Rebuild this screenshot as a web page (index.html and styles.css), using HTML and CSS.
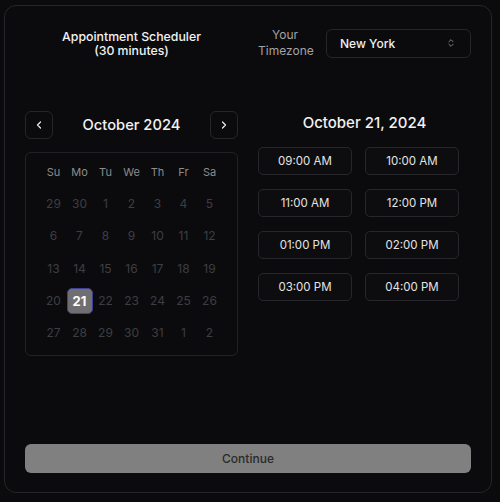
FILE: index.html
```html
<!DOCTYPE html>
<html>
<head>
<meta charset="utf-8">
<link rel="stylesheet" href="styles.css">
</head>
<body>
<div class="card">
  <div class="header">
    <div class="title">Appointment Scheduler<br>(30 minutes)</div>
    <div class="tz">
      <div class="tz-label">Your<br>Timezone</div>
      <div class="select">
        <span>New York</span>
        <svg class="updown" width="10" height="12" viewBox="0 0 24 24" fill="none" stroke="currentColor" stroke-width="2.2" stroke-linecap="round" stroke-linejoin="round"><path d="m7 15 5 5 5-5"/><path d="m7 9 5-5 5 5"/></svg>
      </div>
    </div>
  </div>
  <div class="main">
    <div class="left">
      <div class="nav">
        <button class="navbtn"><svg width="12" height="12" viewBox="0 0 24 24" fill="none" stroke="currentColor" stroke-width="2.4" stroke-linecap="round" stroke-linejoin="round"><path d="m15 18-6-6 6-6"/></svg></button>
        <div class="month">October 2024</div>
        <button class="navbtn"><svg width="12" height="12" viewBox="0 0 24 24" fill="none" stroke="currentColor" stroke-width="2.4" stroke-linecap="round" stroke-linejoin="round"><path d="m9 18 6-6-6-6"/></svg></button>
      </div>
      <div class="cal">
        <div class="wd">Su</div><div class="wd">Mo</div><div class="wd">Tu</div><div class="wd">We</div><div class="wd">Th</div><div class="wd">Fr</div><div class="wd">Sa</div>
        <div class="d">29</div><div class="d">30</div><div class="d">1</div><div class="d">2</div><div class="d">3</div><div class="d">4</div><div class="d">5</div>
        <div class="d">6</div><div class="d">7</div><div class="d">8</div><div class="d">9</div><div class="d">10</div><div class="d">11</div><div class="d">12</div>
        <div class="d">13</div><div class="d">14</div><div class="d">15</div><div class="d">16</div><div class="d">17</div><div class="d">18</div><div class="d">19</div>
        <div class="d">20</div><div class="d sel">21</div><div class="d">22</div><div class="d">23</div><div class="d">24</div><div class="d">25</div><div class="d">26</div>
        <div class="d">27</div><div class="d">28</div><div class="d">29</div><div class="d">30</div><div class="d">31</div><div class="d">1</div><div class="d">2</div>
      </div>
    </div>
    <div class="right">
      <div class="date">October 21, 2024</div>
      <div class="slots">
        <div class="slot">09:00 AM</div><div class="slot">10:00 AM</div>
        <div class="slot">11:00 AM</div><div class="slot">12:00 PM</div>
        <div class="slot">01:00 PM</div><div class="slot">02:00 PM</div>
        <div class="slot">03:00 PM</div><div class="slot">04:00 PM</div>
      </div>
    </div>
  </div>
  <button class="continue">Continue</button>
</div>
</body>
</html>
```
FILE: styles.css
```css
* { box-sizing: border-box; }
html, body { margin: 0; background: #0b0b0d; }
body {
  padding: 5px 0 0 4px;
  font-family: Inter, "Noto Sans", sans-serif;
  color: #ededed;
}
.card {
  width: 488px;
  height: 488px;
  border: 1px solid #26262a;
  border-radius: 12px;
  background: #0b0b0d;
  padding: 21px 20px 19px;
  display: flex;
  flex-direction: column;
}
.header {
  display: grid;
  grid-template-columns: 213px 213px;
  column-gap: 20px;
  align-items: center;
}
.title {
  padding-top: 1px;
  text-align: center;
  font-size: 12.3px;
  font-weight: 500;
  line-height: 14px;
  color: #f2f2f2;
}
.tz {
  display: flex;
  align-items: center;
  gap: 14px;
}
.tz-label {
  width: 54px;
  text-align: center;
  font-size: 12px;
  line-height: 16px;
  color: #a3a3a3;
}
.select {
  flex: 1;
  height: 29px;
  border: 1px solid #26262a;
  border-radius: 6px;
  display: flex;
  align-items: center;
  justify-content: space-between;
  padding: 0 14px 0 13px;
  font-size: 12px;
  font-weight: 500;
  color: #f0f0f0;
}
.updown { color: #8a8a8a; }
.main {
  margin-top: 52px;
  display: grid;
  grid-template-columns: 213px 213px;
  column-gap: 20px;
  align-items: start;
}
.nav {
  display: flex;
  align-items: center;
  justify-content: space-between;
  height: 28px;
}
.navbtn {
  width: 28px;
  height: 28px;
  padding: 0;
  background: transparent;
  border: 1px solid #26262a;
  border-radius: 6px;
  color: #f0f0f0;
  display: flex;
  align-items: center;
  justify-content: center;
}
.month {
  font-size: 14.7px;
  font-weight: 500;
  color: #f2f2f2;
}
.cal {
  margin-top: 13px;
  height: 204px;
  border: 1px solid #222226;
  border-radius: 6px;
  padding: 10px 15px 0;
  display: grid;
  grid-template-columns: repeat(7, 26px);
  grid-template-rows: 21px repeat(5, 26px);
  row-gap: 6.4px;
  justify-content: center;
  align-content: start;
}
.wd {
  font-size: 11px;
  color: #8c8c8c;
  display: flex;
  align-items: center;
  justify-content: center;
  margin-bottom: 2.6px;
}
.d {
  font-size: 12px;
  color: #3e3e42;
  display: flex;
  align-items: center;
  justify-content: center;
  border-radius: 5px;
}
.d.sel {
  background: #6f6f71;
  border: 1px solid #3f4294;
  color: #ffffff;
  font-weight: 700;
  font-size: 13px;
}
.date {
  padding-top: 1px;
  text-align: center;
  font-size: 15px;
  font-weight: 500;
  line-height: 22px;
  color: #f2f2f2;
}
.slots {
  margin-top: 13px;
  display: grid;
  grid-template-columns: 94px 94px;
  grid-auto-rows: 28px;
  column-gap: 13px;
  row-gap: 14px;
}
.slot {
  border: 1px solid #27272b;
  border-radius: 5px;
  background: #0d0d0f;
  display: flex;
  align-items: center;
  justify-content: center;
  font-size: 11.5px;
  color: #e4e4e4;
}
.continue {
  margin-top: auto;
  height: 29px;
  width: 100%;
  border: none;
  border-radius: 6px;
  background: #808080;
  color: #2a2a2a;
  font-family: Inter, "Noto Sans", sans-serif;
  font-size: 12px;
  font-weight: 500;
}
```
